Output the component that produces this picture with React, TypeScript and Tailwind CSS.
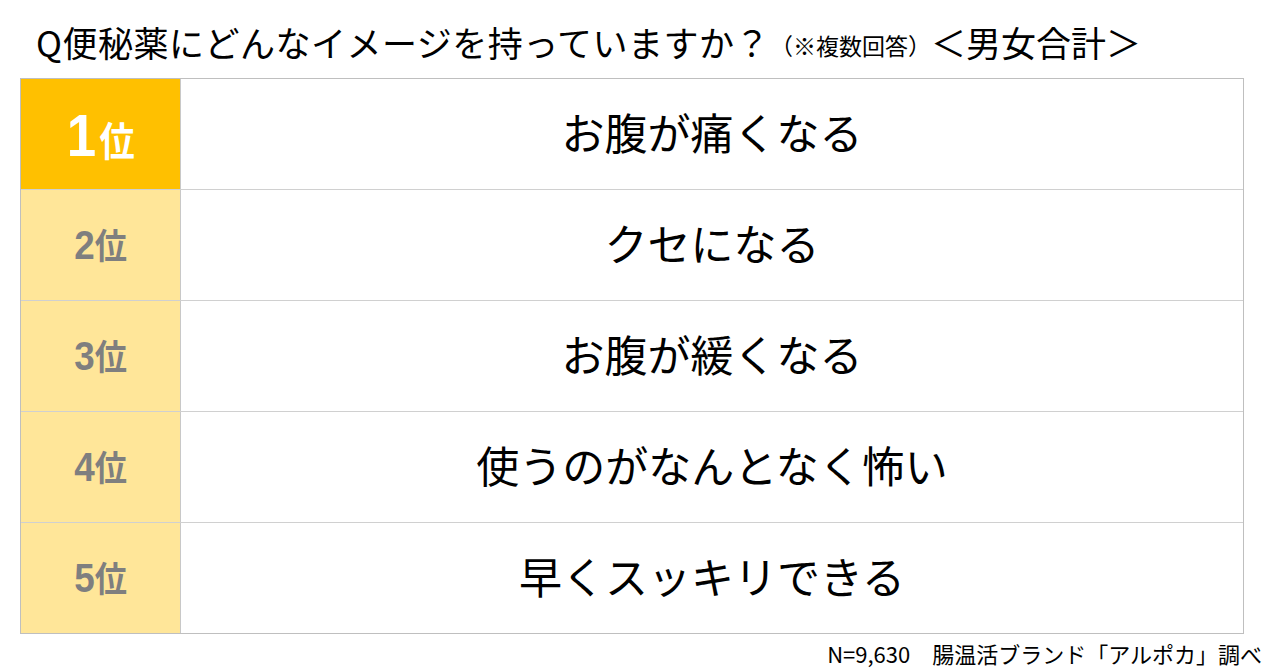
const items = [
  "お腹が痛くなる",
  "クセになる",
  "お腹が緩くなる",
  "使うのがなんとなく怖い",
  "早くスッキリできる",
];

const jp = "font-['Noto_Sans_CJK_JP',sans-serif]";

function Rank({ n }: { n: number }) {
  if (n === 1) {
    return (
      <div className="flex items-center justify-center bg-[#ffc000] border-r border-[#c8c8c8]">
        <span className={`${jp} font-bold text-white flex items-baseline scale-x-[0.88] pt-1`}>
          <span className="text-[60px] leading-none font-['Liberation_Sans',sans-serif]">1</span>
          <span className="text-[40px] leading-none ml-1">位</span>
        </span>
      </div>
    );
  }
  return (
    <div className="flex items-center justify-center bg-[#ffe699] border-r border-[#c8c8c8]">
      <span className={`${jp} font-bold text-[#7f7f7f] flex items-baseline scale-x-[0.92]`}>
        <span className="text-[40px] leading-none font-['Liberation_Sans',sans-serif]">{n}</span>
        <span className="text-[35px] leading-none">位</span>
      </span>
    </div>
  );
}

export default function App() {
  return (
    <div className={`w-[1280px] h-[670px] bg-white flex flex-col ${jp}`}>
      <div className="h-[78px] flex items-center pl-[36px] pt-[6px] text-black whitespace-nowrap">
        <span className="text-[35px] tracking-[0.5px]">Q便秘薬にどんなイメージを持っていますか？</span>
        <span className="text-[23px] mt-[6px]">（※複数回答）</span>
        <span className="text-[35px]">＜男女合計＞</span>
      </div>

      <div className="ml-[20px] w-[1224px] border border-[#bfbfbf] flex flex-col">
        {items.map((text, i) => (
          <div
            key={text}
            className={`grid grid-cols-[160px_1fr] ${i < items.length - 1 ? "h-[111px] border-b border-[#d0d0d0]" : "h-[110px]"}`}
          >
            <Rank n={i + 1} />
            <div className="flex items-center justify-center text-[43px] text-black pb-[6px]">{text}</div>
          </div>
        ))}
      </div>

      <div className="flex justify-end pr-[18px] pt-[8px] text-[22px] text-black leading-none">
        N=9,630　腸温活ブランド「アルポカ」調べ
      </div>
    </div>
  );
}
